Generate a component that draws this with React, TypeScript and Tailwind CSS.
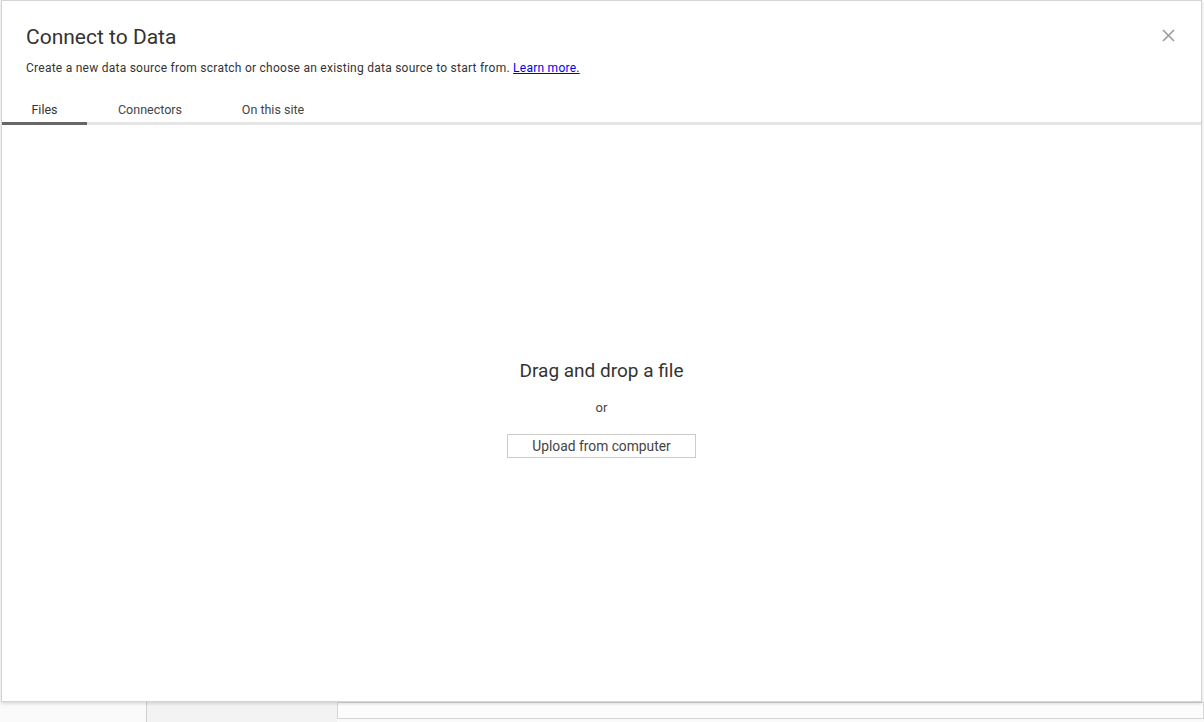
const font = { fontFamily: "Roboto, 'Noto Sans', Arial, sans-serif" };

function Tab({ label, active, width }: { label: string; active?: boolean; width: string }) {
  return (
    <div className={`${width} flex flex-col items-center`}>
      <span className={`text-[12.5px] leading-[14px] pb-[5px] ${active ? "text-[#333]" : "text-[#444]"}`}>
        {label}
      </span>
      <div className={`h-[3px] w-full ${active ? "bg-[#666]" : "bg-transparent"}`} />
    </div>
  );
}

export default function App() {
  return (
    <div className="relative w-[1204px] h-[722px] overflow-hidden bg-white" style={font}>
      {/* page behind the dialog */}
      <div className="flex h-full">
        <div className="w-[147px] bg-[#fafafa] border-r border-[#d0d0d0]" />
        <div className="w-[190px] bg-[#f3f3f3]" />
        <div className="flex-1 flex flex-col bg-[#fafafa]">
          <div className="flex-1" />
          <div className="h-[17px] mb-[3px] bg-[#fcfcfc] border border-[#d6d6d6]" />
        </div>
      </div>

      {/* modal */}
      <div className="absolute left-[1px] top-0 w-[1201px] h-[702px] bg-white border border-[#d4d4d4] shadow-[0_2px_3px_rgba(0,0,0,0.12)] flex flex-col">
        <div className="flex justify-between pl-[24px] pr-[26px] pt-[24px]">
          <div>
            <h1 className="text-[21px] leading-[24px] text-[#333]">Connect to Data</h1>
            <p className="mt-[12px] text-[12px] tracking-[0.25px] leading-[14px] text-[#333]">
              Create a new data source from scratch or choose an existing data source to start from.{" "}
              <a href="#" className="text-[#0000ee] underline">
                Learn more.
              </a>
            </p>
          </div>
          <svg width="13" height="13" viewBox="0 0 13 13" className="mt-[4px]">
            <path d="M1 1 L12 12 M12 1 L1 12" stroke="#9a9a9a" strokeWidth="1.6" fill="none" />
          </svg>
        </div>

        <div className="mt-[28px] relative flex">
          <div className="absolute left-0 right-0 bottom-0 h-[3px] bg-[#e6e6e6]" />
          <div className="relative flex">
            <Tab label="Files" active width="w-[85px]" />
            <Tab label="Connectors" width="w-[126px]" />
            <Tab label="On this site" width="w-[120px]" />
          </div>
        </div>

        <div className="flex-1 flex flex-col items-center justify-center pb-[8px]">
          <div className="text-[19px] leading-[22px] text-[#333]">Drag and drop a file</div>
          <div className="mt-[18px] text-[13px] leading-[16px] text-[#444]">or</div>
          <button className="mt-[18px] w-[189px] h-[24px] border border-[#cbcbcb] bg-white text-[13.8px] text-[#444]">
            Upload from computer
          </button>
        </div>
      </div>
    </div>
  );
}
